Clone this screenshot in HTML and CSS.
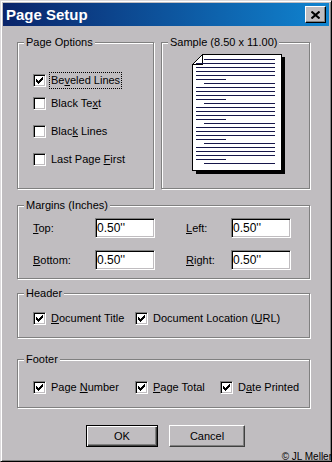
FILE: index.html
```html
<!DOCTYPE html>
<html lang="en">
<head>
  <meta charset="UTF-8">
  <title>Page Setup</title>
  <link rel="stylesheet" href="styles.css">
</head>
<body>
  <div class="window">
    <div class="titlebar">
      <span class="title">Page Setup</span>
      <button class="close">
        <svg width="9" height="8" viewBox="0 0 9 8"><path d="M0.5 0.5 L8.5 7.5 M8.5 0.5 L0.5 7.5" stroke="#000" stroke-width="2"/></svg>
      </button>
    </div>

    <div class="content">
      <div class="top-row">
        <fieldset class="group options">
          <legend>Page Options</legend>
          <div class="option-list">
            <label class="check focus"><span class="box"><svg class="tick" width="11" height="11" viewBox="0 0 11 11"><path d="M2 4H3V5H4V6H5V5H6V4H7V3H8V2H9V5H8V6H7V7H6V8H5V9H4V8H3V7H2Z"/></svg></span><span class="text">Be<u>v</u>eled Lines</span></label>
            <label class="check"><span class="box"></span><span class="text">Black Te<u>x</u>t</span></label>
            <label class="check"><span class="box"></span><span class="text">Blac<u>k</u> Lines</span></label>
            <label class="check"><span class="box"></span><span class="text">Last Page <u>F</u>irst</span></label>
          </div>
        </fieldset>

        <fieldset class="group sample">
          <legend>Sample (8.50 x 11.00)</legend>
          <svg class="page" width="98" height="124" viewBox="0 0 98 124" shape-rendering="crispEdges">
            <rect x="92" y="5" width="3" height="117" fill="#000"/>
            <rect x="6" y="119" width="89" height="3" fill="#000"/>
            <polygon points="12.5,2.5 91.5,2.5 91.5,118.5 2.5,118.5 2.5,12.5" fill="#fff" stroke="#000"/>
            <polygon points="2.5,12.5 12.5,2.5 12.5,12.5" fill="#fff" stroke="#000"/>
            <g stroke="#16164a">
              <path d="M14 7.5h71 M14 31.5h71 M14 51.5h71 M14 71.5h71 M14 91.5h71 M14 111.5h71"/>
              <path d="M6 11.5h79 M6 15.5h79 M6 19.5h79 M6 23.5h79 M6 35.5h79 M6 39.5h79 M6 43.5h79 M6 55.5h79 M6 59.5h79 M6 63.5h79 M6 75.5h79 M6 79.5h79 M6 83.5h79 M6 95.5h79 M6 99.5h79 M6 103.5h79"/>
              <path d="M6 27.5h30 M6 47.5h30 M6 67.5h30 M6 87.5h30 M6 107.5h30"/>
            </g>
          </svg>
        </fieldset>
      </div>

      <fieldset class="group margins">
        <legend>Margins (Inches)</legend>
        <div class="margin-grid">
          <label class="field-label"><u>T</u>op:</label>
          <input class="field" type="text" value="0.50''">
          <label class="field-label"><u>L</u>eft:</label>
          <input class="field" type="text" value="0.50''">
          <label class="field-label"><u>B</u>ottom:</label>
          <input class="field" type="text" value="0.50''">
          <label class="field-label"><u>R</u>ight:</label>
          <input class="field" type="text" value="0.50''">
        </div>
      </fieldset>

      <fieldset class="group header">
        <legend>Header</legend>
        <div class="row">
          <label class="check"><span class="box"><svg class="tick" width="11" height="11" viewBox="0 0 11 11"><path d="M2 4H3V5H4V6H5V5H6V4H7V3H8V2H9V5H8V6H7V7H6V8H5V9H4V8H3V7H2Z"/></svg></span><span class="text"><u>D</u>ocument Title</span></label>
          <label class="check"><span class="box"><svg class="tick" width="11" height="11" viewBox="0 0 11 11"><path d="M2 4H3V5H4V6H5V5H6V4H7V3H8V2H9V5H8V6H7V7H6V8H5V9H4V8H3V7H2Z"/></svg></span><span class="text">Document Location (<u>U</u>RL)</span></label>
        </div>
      </fieldset>

      <fieldset class="group footer">
        <legend>Footer</legend>
        <div class="row">
          <label class="check"><span class="box"><svg class="tick" width="11" height="11" viewBox="0 0 11 11"><path d="M2 4H3V5H4V6H5V5H6V4H7V3H8V2H9V5H8V6H7V7H6V8H5V9H4V8H3V7H2Z"/></svg></span><span class="text">Page <u>N</u>umber</span></label>
          <label class="check"><span class="box"><svg class="tick" width="11" height="11" viewBox="0 0 11 11"><path d="M2 4H3V5H4V6H5V5H6V4H7V3H8V2H9V5H8V6H7V7H6V8H5V9H4V8H3V7H2Z"/></svg></span><span class="text"><u>P</u>age Total</span></label>
          <label class="check"><span class="box"><svg class="tick" width="11" height="11" viewBox="0 0 11 11"><path d="M2 4H3V5H4V6H5V5H6V4H7V3H8V2H9V5H8V6H7V7H6V8H5V9H4V8H3V7H2Z"/></svg></span><span class="text">D<u>a</u>te Printed</span></label>
        </div>
      </fieldset>

      <div class="buttons">
        <button class="btn default">OK</button>
        <button class="btn cancel">Cancel</button>
      </div>
    </div>

    <div class="credit">© JL Meller</div>
  </div>
</body>
</html>
```

FILE: styles.css
```css
body {
  margin: 0;
  font-family: "Liberation Sans", Arial, sans-serif;
  font-size: 11px;
  color: #000;
  background: #c0bdc0;
}

.window {
  position: relative;
  width: 332px;
  height: 462px;
  box-sizing: border-box;
  padding: 2px;
  background: #c0bdc0;
  border: 1px solid;
  border-color: #dcdadc #000 #000 #dcdadc;
  box-shadow: inset 1px 1px 0 #fff, inset -1px -1px 0 #808080;
  overflow: hidden;
}

/* title bar */
.titlebar {
  display: flex;
  align-items: center;
  justify-content: space-between;
  height: 23px;
  padding: 0 3px;
  background: linear-gradient(to right, #0a246a, #1084d0);
}

.title {
  color: #fff;
  font-weight: bold;
  font-size: 15px;
}

.close {
  display: flex;
  align-items: center;
  justify-content: center;
  width: 21px;
  height: 17px;
  padding: 0;
  background: #c0bdc0;
  border: 1px solid;
  border-color: #fff #000 #000 #fff;
  box-shadow: inset -1px -1px 0 #808080;
}

.close svg {
  display: block;
}

.content {
  padding: 9px 0 0 14px;
}

/* group boxes */
.top-row {
  display: flex;
  gap: 7px;
}

.group {
  margin: 0;
  padding: 0;
  min-width: 0;
  box-sizing: border-box;
  border: 1px solid #808080;
  box-shadow: inset 1px 1px 0 #fff, 1px 1px 0 #fff;
}

.group legend {
  margin-left: 6px;
  padding: 0 2px;
  line-height: 14px;
  background: #c0bdc0;
}

.options {
  width: 137px;
  height: 154px;
}

.sample {
  width: 149px;
  height: 154px;
}

.margins,
.header,
.footer {
  width: 293px;
}

.margins {
  margin-top: 9px;
}

.header {
  margin-top: 7px;
}

.footer {
  margin-top: 14px;
}

.option-list {
  display: flex;
  flex-direction: column;
  gap: 11px;
  padding: 23px 0 0 15px;
}

.option-list .focus {
  margin-bottom: -5px; /* the first row sits closer to the next */
}

/* checkboxes */
.check {
  display: flex;
  align-items: center;
  height: 17px;
}

.box {
  flex: none;
  width: 13px;
  height: 13px;
  box-sizing: border-box;
  background: #fff;
  border: 1px solid;
  border-color: #808080 #fff #fff #808080;
  box-shadow: inset 1px 1px 0 #000, inset -1px -1px 0 #c0bdc0;
}

.tick {
  display: block;
}

.text {
  margin-left: 3px;
  padding: 1px;
  line-height: 13px;
  border: 1px solid transparent;
  white-space: nowrap;
}

.focus .text {
  border: 1px dotted #000;
}

/* sample page */
.page {
  display: block;
  margin: 3px 0 0 28px;
}

/* margins */
.margin-grid {
  display: grid;
  grid-template-columns: 62px 91px 45px 60px;
  row-gap: 12px;
  align-items: center;
  padding: 6px 0 8px 15px;
}

.field {
  width: 60px;
  height: 20px;
  box-sizing: border-box;
  margin: 0;
  padding: 0 0 0 1px;
  font-family: "Liberation Sans", Arial, sans-serif;
  font-size: 12px;
  color: #000;
  background: #fff;
  border: 1px solid;
  border-color: #808080 #fff #fff #808080;
  box-shadow: inset 1px 1px 0 #000, inset -1px -1px 0 #c0bdc0;
  outline: none;
}

.header .row {
  display: grid;
  grid-template-columns: 102px auto;
  padding: 10px 0 10px 15px;
}

.footer .row {
  display: grid;
  grid-template-columns: 102px 85px auto;
  padding: 13px 0 11px 15px;
}

/* buttons */
.buttons {
  display: flex;
  gap: 11px;
  margin-top: 17px;
  padding-left: 69px;
}

.btn {
  height: 22px;
  padding: 0;
  font-family: "Liberation Sans", Arial, sans-serif;
  font-size: 11px;
  color: #000;
  background: #c0bdc0;
  border: 1px solid;
  border-color: #fff #404040 #404040 #fff;
  box-shadow: inset -1px -1px 0 #808080;
}

.btn.default {
  width: 72px;
  border-color: #000;
  box-shadow: inset 1px 1px 0 #fff, inset -1px -1px 0 #404040, inset -2px -2px 0 #808080;
}

.btn.cancel {
  width: 76px;
}

.credit {
  position: absolute;
  right: -1px;
  bottom: -2px;
  font-size: 10px;
  line-height: 12px;
}
```
